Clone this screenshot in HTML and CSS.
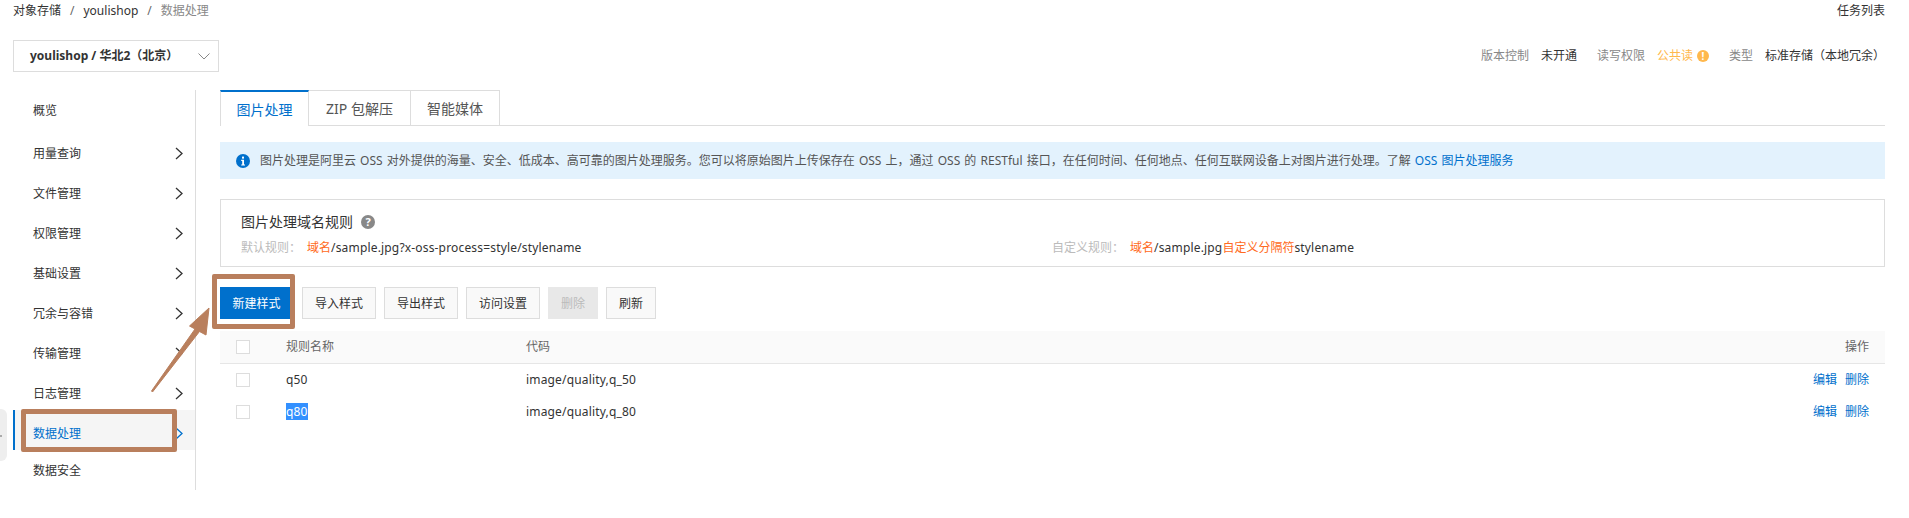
FILE: index.html
```html
<!DOCTYPE html>
<html lang="zh-CN">
<head>
<meta charset="utf-8">
<title>数据处理</title>
<link rel="stylesheet" href="styles.css">
</head>
<body>
<div class="page">
  <header class="crumbbar">
    <nav class="crumbs"><span>对象存储</span><i>/</i><span>youlishop</span><i>/</i><span class="muted">数据处理</span></nav>
    <a class="tasks">任务列表</a>
  </header>
  <div class="metabar">
    <div class="bucket"><b>youlishop / 华北2（北京）</b>
      <svg class="caret" width="12" height="7" viewBox="0 0 12 7"><path d="M.5.500l5.500 5.500 5.500-5.500" fill="none" stroke="#888" stroke-width="1"/></svg>
    </div>
    <div class="meta">
      <span class="label">版本控制</span><span class="val gap">未开通</span>
      <span class="label">读写权限</span><span class="warn">公共读</span><span class="warn-dot gap">!</span>
      <span class="label">类型</span><span class="val">标准存储（本地冗余）</span>
    </div>
  </div>
  <div class="main">
    <aside class="side">
      <div class="item first">概览</div>
      <div class="item">用量查询<svg class="chev" viewBox="0 0 8 13"><path d="M1 1l6 5.500L1 12" /></svg></div>
      <div class="item">文件管理<svg class="chev" viewBox="0 0 8 13"><path d="M1 1l6 5.500L1 12" /></svg></div>
      <div class="item">权限管理<svg class="chev" viewBox="0 0 8 13"><path d="M1 1l6 5.500L1 12" /></svg></div>
      <div class="item">基础设置<svg class="chev" viewBox="0 0 8 13"><path d="M1 1l6 5.500L1 12" /></svg></div>
      <div class="item">冗余与容错<svg class="chev" viewBox="0 0 8 13"><path d="M1 1l6 5.500L1 12" /></svg></div>
      <div class="item">传输管理<svg class="chev" viewBox="0 0 8 13"><path d="M1 1l6 5.500L1 12" /></svg></div>
      <div class="item">日志管理<svg class="chev" viewBox="0 0 8 13"><path d="M1 1l6 5.500L1 12" /></svg></div>
      <div class="item active">数据处理<svg class="chev" viewBox="0 0 8 13"><path d="M1 1l6 5.500L1 12" /></svg></div>
      <div class="item first">数据安全</div>
    </aside>
    <section class="content">
      <div class="tabs">
        <div class="tab on">图片处理</div>
        <div class="tab second">ZIP 包解压</div>
        <div class="tab third">智能媒体</div>
      </div>
      <div class="notice">
        <svg class="info" width="14" height="14" viewBox="0 0 14 14"><circle cx="7" cy="7" r="7" fill="#0070cc"/><rect x="6" y="2.600" width="2" height="2" fill="#fff"/><path d="M5.200 5.800H8v4.600h1v1.100H5.200v-1.100h1V6.900h-1z" fill="#fff"/></svg>
        <span>图片处理是阿里云 OSS 对外提供的海量、安全、低成本、高可靠的图片处理服务。您可以将原始图片上传保存在 OSS 上，通过 OSS 的 RESTful 接口，在任何时间、任何地点、任何互联网设备上对图片进行处理。了解 <a class="link">OSS 图片处理服务</a></span>
      </div>
      <div class="rules">
        <div class="rules-title">图片处理域名规则<span class="help">?</span></div>
        <div class="rules-row">
          <div class="rule"><span class="rule-label">默认规则：</span><em>域名</em><span class="lat">/sample.jpg?x-oss-process=style/stylename</span></div>
          <div class="rule"><span class="rule-label">自定义规则：</span><em>域名</em><span class="lat">/sample.jpg</span><em>自定义分隔符</em><span class="lat">stylename</span></div>
        </div>
      </div>
      <div class="toolbar">
        <button class="btn primary">新建样式</button>
        <button class="btn wide">导入样式</button>
        <button class="btn wide">导出样式</button>
        <button class="btn wide">访问设置</button>
        <button class="btn narrow disabled">删除</button>
        <button class="btn narrow">刷新</button>
      </div>
      <div class="table">
        <div class="row head"><span class="box"></span><span class="name">规则名称</span><span class="code">代码</span><span class="ops">操作</span></div>
        <div class="row"><span class="box"></span><span class="name lat">q50</span><span class="code lat">image/quality,q_50</span><span class="ops"><a class="link">编辑</a><a class="link">删除</a></span></div>
        <div class="row"><span class="box"></span><span class="name lat"><span class="sel">q80</span></span><span class="code lat">image/quality,q_80</span><span class="ops"><a class="link">编辑</a><a class="link">删除</a></span></div>
      </div>
    </section>
  </div>
</div>
<div class="handle"></div>
<div class="mark mark-btn"></div>
<div class="mark mark-item"></div>
<svg class="arrow" width="70" height="95" viewBox="0 0 70 95"><path d="M1.500 88L45 26 39.500 23 59 5 56 32 49.500 28.500 2.500 89z" fill="#b97f5d" stroke="#b97f5d" stroke-width="1" stroke-linejoin="round"/></svg>
</body>
</html>
```
FILE: styles.css
```css
* { box-sizing: border-box; }
html, body { margin: 0; padding: 0; background: #fff; }
body { font: 12px/18px "Noto Sans", "Noto Sans CJK SC", sans-serif; color: #333; height: 518px; overflow: hidden; position: relative; }
.lat { letter-spacing: .17px; }
.page { padding: 0 24px 0 13px; }
.crumbbar { display: flex; justify-content: space-between; height: 22px; align-items: center; }
.crumbs i { font-style: normal; margin: 0 9px; color: #666; }
.muted { color: #888; }
.tasks { color: #333; }
.metabar { display: flex; justify-content: space-between; align-items: center; margin-top: 18px; height: 32px; }
.bucket { width: 206px; height: 32px; border: 1px solid #ddd; display: flex; align-items: center; justify-content: space-between; padding: 0 8px 0 16px; }
.bucket b { font-size: 12px; font-weight: 700; color: #333; }
.meta { display: flex; align-items: center; }
.label { color: #888; margin-right: 12px; }
.val { color: #333; }
.gap { margin-right: 20px; }
.warn { color: #ffb84d; margin-right: 4px; }
.warn-dot { width: 12px; height: 12px; border-radius: 50%; background: #ffb84d; color: #fff; font-size: 10px; line-height: 12px; text-align: center; font-weight: 700; }
.main { display: flex; margin-top: 18px; }
.side { width: 183px; height: 400px; margin-right: 24px; border-right: 1px solid #ddd; flex: none; }
.item { position: relative; height: 40px; padding: 4px 0 0 20px; line-height: 40px; color: #333; }
.item.first { padding-top: 1px; }
.chev { position: absolute; right: 12px; top: 17px; width: 8px; height: 13px; fill: none; stroke: #333; stroke-width: 1.300; }
.active { background: #f5f5f5; color: #0070cc; border-left: 2px solid #0070cc; padding-left: 18px; }
.active .chev { stroke: #0070cc; }
.content { flex: 1; min-width: 0; }
.tabs { display: flex; height: 36px; border-bottom: 1px solid #ddd; }
.tab { height: 35px; padding: 0 17px; font-size: 14px; line-height: 35px; color: #555; border: 1px solid #ddd; border-left: 0; border-bottom: 0; text-align: center; white-space: nowrap; }
.tab.on { width: 89px; padding: 0; color: #0070cc; background: #fff; border: 1px solid #ddd; border-top: 2px solid #0070cc; border-bottom: 0; height: 36px; }
.second { width: 102px; padding: 0; }
.third { width: 89px; padding: 0; }
.notice { display: flex; align-items: center; height: 37px; margin-top: 16px; padding-left: 16px; background: #e3f2fd; color: #555; word-spacing: 1px; }
.info { margin-right: 10px; flex: none; }
.link { color: #0070cc; }
.rules { height: 68px; margin-top: 20px; border: 1px solid #ddd; padding: 12px 20px 0; }
.rules-title { font-size: 14px; line-height: 20px; color: #333; display: flex; align-items: center; }
.help { width: 14px; height: 14px; margin-left: 8px; border-radius: 50%; background: #888; color: #fff; font-size: 11px; line-height: 14px; text-align: center; font-weight: 700; }
.rules-row { display: grid; grid-template-columns: 811px 1fr; margin-top: 7px; color: #333; }
.rule-label { color: #bbb; margin-right: 6px; }
.rule em { font-style: normal; color: #ff6a21; }
.toolbar { display: flex; margin-top: 20px; height: 32px; }
.btn { height: 32px; padding: 2px 0 0; font: inherit; line-height: 28px; border: 1px solid #ddd; background: #f9f9f9; color: #333; margin-right: 8px; }
.primary { width: 70px; padding-left: 3px; background: #0070cc; border-color: #0070cc; color: #fff; margin-right: 12px; }
.wide { width: 74px; }
.narrow { width: 50px; }
.disabled { background: #e8e8e8; border-color: #e8e8e8; color: #bbb; }
.table { margin-top: 12px; }
.row { display: flex; align-items: center; height: 32px; padding: 0 16px; }
.head { height: 33px; background: #fafafa; border-bottom: 1px solid #e6e6e6; color: #666; }
.box { width: 14px; height: 14px; border: 1px solid #ddd; background: #fff; margin-right: 36px; flex: none; }
.name { width: 240px; }
.code { flex: 1; }
.ops a + a { margin-left: 8px; }
.sel { background: #3390ff; color: #fff; }
.handle { position: absolute; left: 0; top: 409px; width: 7px; height: 52px; background: #eee; border-radius: 0 6px 6px 0; }
.handle::after { content: ""; position: absolute; left: 0; top: 26px; width: 2px; height: 2px; background: #aaa; }
.mark { position: absolute; border: 5px solid #b97f5d; border-radius: 2px; }
.mark-btn { left: 212px; top: 274px; width: 83px; height: 55px; }
.mark-item { left: 21px; top: 409px; width: 156px; height: 43px; }
.arrow { position: absolute; left: 150px; top: 303px; }
```
